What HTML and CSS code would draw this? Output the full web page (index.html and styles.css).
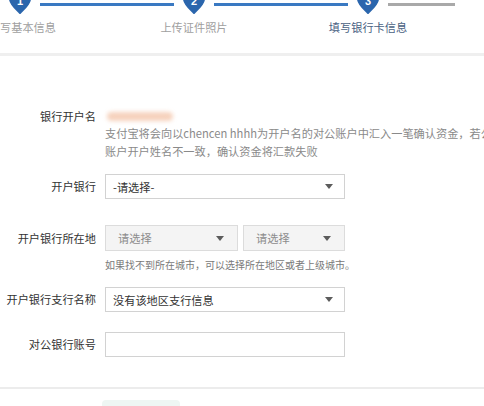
FILE: index.html
```html
<!DOCTYPE html>
<html lang="zh-CN">
<head>
<meta charset="utf-8">
<title>填写银行卡信息</title>
<link rel="stylesheet" href="styles.css">
</head>
<body>
<div class="page">
  <div class="steps">
    <div class="step done">
      <div class="step-top">
        <span class="line left"></span>
        <svg class="marker" viewBox="0 0 24 24" width="24" height="24"><path d="M2 -2 L22 -2 L22 9 C22 14 17 18 12 23 C7 18 2 14 2 9 Z"/><text x="12" y="15">1</text></svg>
        <span class="line right"></span>
      </div>
      <div class="step-label first">写基本信息</div>
    </div>
    <div class="step done">
      <div class="step-top">
        <span class="line left"></span>
        <svg class="marker" viewBox="0 0 24 24" width="24" height="24"><path d="M2 -2 L22 -2 L22 9 C22 14 17 18 12 23 C7 18 2 14 2 9 Z"/><text x="12" y="15">2</text></svg>
        <span class="line right"></span>
      </div>
      <div class="step-label">上传证件照片</div>
    </div>
    <div class="step current">
      <div class="step-top">
        <span class="line left"></span>
        <svg class="marker" viewBox="0 0 24 24" width="24" height="24"><path d="M2 -2 L22 -2 L22 9 C22 14 17 18 12 23 C7 18 2 14 2 9 Z"/><text x="12" y="15">3</text></svg>
        <span class="line right todo"></span>
      </div>
      <div class="step-label">填写银行卡信息</div>
    </div>
  </div>
  <div class="band"></div>

  <form class="form">
    <div class="row row-name">
      <label class="label">银行开户名</label>
      <div class="field">
        <div class="name-line"><span class="name-blur"></span></div>
        <p class="help">支付宝将会向以chencen hhhh为开户名的对公账户中汇入一笔确认资金，若公<br>账户开户姓名不一致，确认资金将汇款失败</p>
      </div>
    </div>

    <div class="row row-bank">
      <label class="label">开户银行</label>
      <div class="field">
        <div class="select wide"><span class="select-text">-请选择-</span><span class="arrow"></span></div>
      </div>
    </div>

    <div class="row row-region">
      <label class="label">开户银行所在地</label>
      <div class="field">
        <div class="select-pair">
          <div class="select gray province"><span class="select-text">请选择</span><span class="arrow"></span></div>
          <div class="select gray city"><span class="select-text">请选择</span><span class="arrow"></span></div>
        </div>
        <p class="hint">如果找不到所在城市，可以选择所在地区或者上级城市。</p>
      </div>
    </div>

    <div class="row row-branch">
      <label class="label">开户银行支行名称</label>
      <div class="field">
        <div class="select wide"><span class="select-text">没有该地区支行信息</span><span class="arrow"></span></div>
      </div>
    </div>

    <div class="row row-account">
      <label class="label">对公银行账号</label>
      <div class="field">
        <div class="input wide"></div>
      </div>
    </div>
  </form>

  <div class="footer-line"></div>
  <div class="footer">
    <span class="submit-ghost"></span>
  </div>
</div>
</body>
</html>
```

FILE: styles.css
```css
html, body {
  margin: 0;
  padding: 0;
  background: #ffffff;
  overflow: hidden;
}

body {
  font-family: "Noto Sans CJK SC", "Microsoft YaHei", "Noto Sans", sans-serif;
  color: #333333;
  width: 484px;
  height: 406px;
}

.page {
  width: 484px;
}

/* ---------- steps ---------- */
.steps {
  display: flex;
  margin-left: -67px;
  margin-top: -10px;
}

.step {
  width: 174px;
  flex-shrink: 0;
  display: flex;
  flex-direction: column;
  align-items: center;
}

.step-top {
  display: flex;
  width: 100%;
  height: 24px;
}

.line {
  flex: 1;
  height: 3px;
  margin-top: 13px;
  background: #3a79c2;
}

.line.left {
  margin-right: 8px;
}

.line.right {
  margin-left: 8px;
}

.line.todo {
  background: #a9a9a9;
}

.marker {
  display: block;
  flex-shrink: 0;
  overflow: visible;
}

.marker path {
  fill: #2b66ad;
  stroke: #2b66ad;
  stroke-width: 2;
  stroke-linejoin: round;
}

.marker text {
  fill: #ffffff;
  font-family: "Liberation Sans", Arial, sans-serif;
  font-weight: bold;
  font-size: 11px;
  text-anchor: middle;
}

.step-label {
  margin-top: 6px;
  font-size: 11.2px;
  line-height: 14px;
  color: #a0a0a0;
  white-space: nowrap;
}

.step-label.first {
  margin-left: 16px;
}

.step.current .step-label {
  color: #4a6283;
}

.band {
  margin-top: 19px;
  height: 3px;
  background: #efefef;
}

/* ---------- form ---------- */
.form {
  padding-top: 52px;
  margin: 0;
}

.row {
  display: flex;
  align-items: flex-start;
}

.label {
  width: 96px;
  flex-shrink: 0;
  text-align: right;
  padding-right: 9px;
  box-sizing: content-box;
  font-size: 11.2px;
  color: #333333;
  white-space: nowrap;
  line-height: 25px;
}

.field {
  flex: 1;
  min-width: 0;
}

.row-name .label {
  line-height: 16px;
}

.name-line {
  height: 16px;
  display: flex;
  align-items: center;
}

.name-blur {
  display: block;
  width: 66px;
  height: 9px;
  margin-left: 2px;
  border-radius: 5px;
  background: #f6d2bd;
  filter: blur(2px);
}

.help {
  margin: 0;
  font-size: 11.2px;
  line-height: 18px;
  color: #8a8a8a;
  white-space: nowrap;
}

.row-bank {
  margin-top: 14px;
}

.row-region {
  margin-top: 26px;
}

.row-region .label {
  line-height: 26px;
}

.row-branch {
  margin-top: 15px;
}

.row-account {
  margin-top: 20px;
}

.select,
.input {
  box-sizing: border-box;
  height: 25px;
  border: 1px solid #d2d2d2;
  background: #ffffff;
  display: flex;
  align-items: center;
  justify-content: space-between;
  padding: 0 11px 0 7px;
}

.wide {
  width: 240px;
}

.select-text {
  font-size: 11.2px;
  color: #333333;
  white-space: nowrap;
}

.arrow {
  width: 0;
  height: 0;
  border-left: 4px solid transparent;
  border-right: 4px solid transparent;
  border-top: 5px solid #5c5c5c;
}

.select-pair {
  display: flex;
  gap: 5px;
}

.select.gray {
  height: 26px;
  background: #f4f4f4;
  border-color: #dcdcdc;
  padding: 0 13px 0 12px;
}

.select.gray .select-text {
  color: #8c8c8c;
}

.select.province {
  width: 133px;
}

.select.city {
  width: 102px;
}

.hint {
  margin: 7px 0 0;
  font-size: 10px;
  line-height: 14px;
  color: #7a7a7a;
  white-space: nowrap;
}

/* ---------- footer ---------- */
.footer-line {
  margin-top: 30px;
  height: 2px;
  background: #ececec;
}

.footer {
  padding-top: 11px;
  padding-left: 102px;
}

.submit-ghost {
  display: block;
  width: 78px;
  height: 20px;
  border-radius: 4px;
  background: #eef6f3;
}
```
